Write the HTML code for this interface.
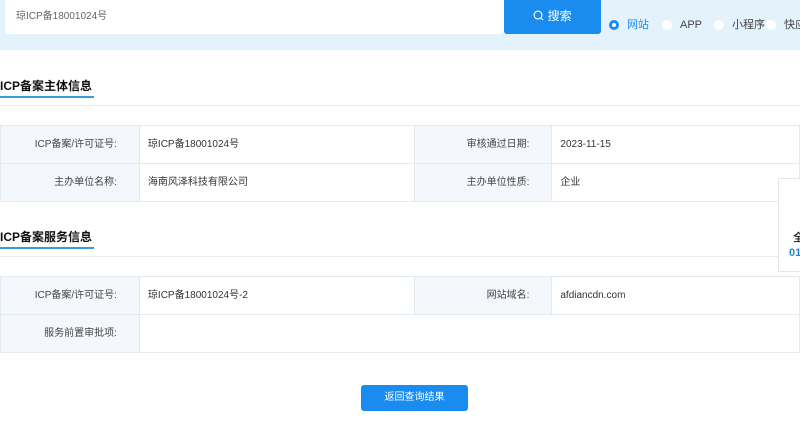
<!DOCTYPE html>
<html><head><meta charset="utf-8"><style>
*{margin:0;padding:0;box-sizing:border-box}
body{width:800px;height:431px;overflow:hidden;background:#fff;font-family:"Liberation Sans","Noto Sans CJK SC",sans-serif;position:relative;color:#333}
.top{position:absolute;left:0;top:0;width:800px;height:50px;background:#e4f2fc}
.inp{position:absolute;left:5px;top:0;width:499px;height:34px;background:#fff;border-radius:0 0 3px 3px;font-size:10px;line-height:14px;color:#666;padding:10px 0 0 11px}
.btn{position:absolute;left:504px;top:0;width:97px;height:34px;background:#1a8cf0;color:#fff;font-size:12px;text-align:center;line-height:32px;border-radius:0 0 3px 3px}
.r{position:absolute;top:18px;font-size:11px;line-height:14px;color:#444;white-space:nowrap}
.dot{position:absolute;top:20px;width:10px;height:10px;border-radius:50%;background:#fff}
.title{position:absolute;left:0;font-size:12px;line-height:16px;font-weight:bold;color:#111}
.ul{position:absolute;left:0;width:94px;height:2px;background:#3a9bd5}
.hl{position:absolute;left:0;width:800px;height:1px;background:#e3edf3}
table{position:absolute;left:0;width:800px;border-collapse:collapse;font-size:10px;line-height:14px}
td{border:1px solid #e3ebf1;height:38px;color:#333;vertical-align:middle;white-space:nowrap}
td.l{background:#f4f8fc;text-align:right;padding-right:22px;color:#444}
td.v{padding-left:8px}
.back{position:absolute;left:361px;top:385px;width:107px;height:26px;background:#1a8cf0;border-radius:3px;color:#fff;font-size:10px;text-align:center;line-height:26px}
.card{position:absolute;left:778px;top:178px;width:30px;height:94px;border:1px solid #e3e8ec;background:#fff}
</style></head><body>
<div class="top">
<div class="inp">琼ICP备18001024号</div>
<div class="btn"><svg width="11" height="11" viewBox="0 0 12 12" style="vertical-align:-1px"><circle cx="5.5" cy="5.5" r="4.3" fill="none" stroke="#fff" stroke-width="1.2"/><path d="M8.6 8.6L11 11" stroke="#fff" stroke-width="1.2"/></svg> 搜索</div>
<div class="dot" style="left:609px;background:#fff;border:3px solid #1a8cf0"></div><div class="r" style="left:627px;color:#1a8cf0">网站</div>
<div class="dot" style="left:662px"></div><div class="r" style="left:680px">APP</div>
<div class="dot" style="left:714px"></div><div class="r" style="left:732px">小程序</div>
<div class="dot" style="left:766px"></div><div class="r" style="left:784px">快应</div>
</div>
<div class="title" style="top:78px">ICP备案主体信息</div>
<div class="ul" style="top:96px"></div><div class="hl" style="top:105px"></div>
<table style="top:125px"><colgroup><col style="width:139px"><col style="width:275px"><col style="width:138px"><col style="width:248px"></colgroup>
<tr><td class="l">ICP备案/许可证号:</td><td class="v">琼ICP备18001024号</td><td class="l">审核通过日期:</td><td class="v">2023-11-15</td></tr>
<tr><td class="l">主办单位名称:</td><td class="v">海南风泽科技有限公司</td><td class="l">主办单位性质:</td><td class="v">企业</td></tr>
</table>
<div class="title" style="top:229px">ICP备案服务信息</div>
<div class="ul" style="top:247px"></div><div class="hl" style="top:256px"></div>
<table style="top:276px"><colgroup><col style="width:139px"><col style="width:275px"><col style="width:138px"><col style="width:248px"></colgroup>
<tr><td class="l">ICP备案/许可证号:</td><td class="v">琼ICP备18001024号-2</td><td class="l">网站域名:</td><td class="v">afdiancdn.com</td></tr>
<tr><td class="l">服务前置审批项:</td><td class="v" colspan="3"></td></tr>
</table>
<div class="card"><div style="position:absolute;left:14px;top:50px;font-size:11px;font-weight:bold">全</div><div style="position:absolute;left:10px;top:68px;font-size:11px;font-weight:bold;color:#1a8cd0">01</div></div>
<div class="back">返回查询结果</div>
</body></html>
